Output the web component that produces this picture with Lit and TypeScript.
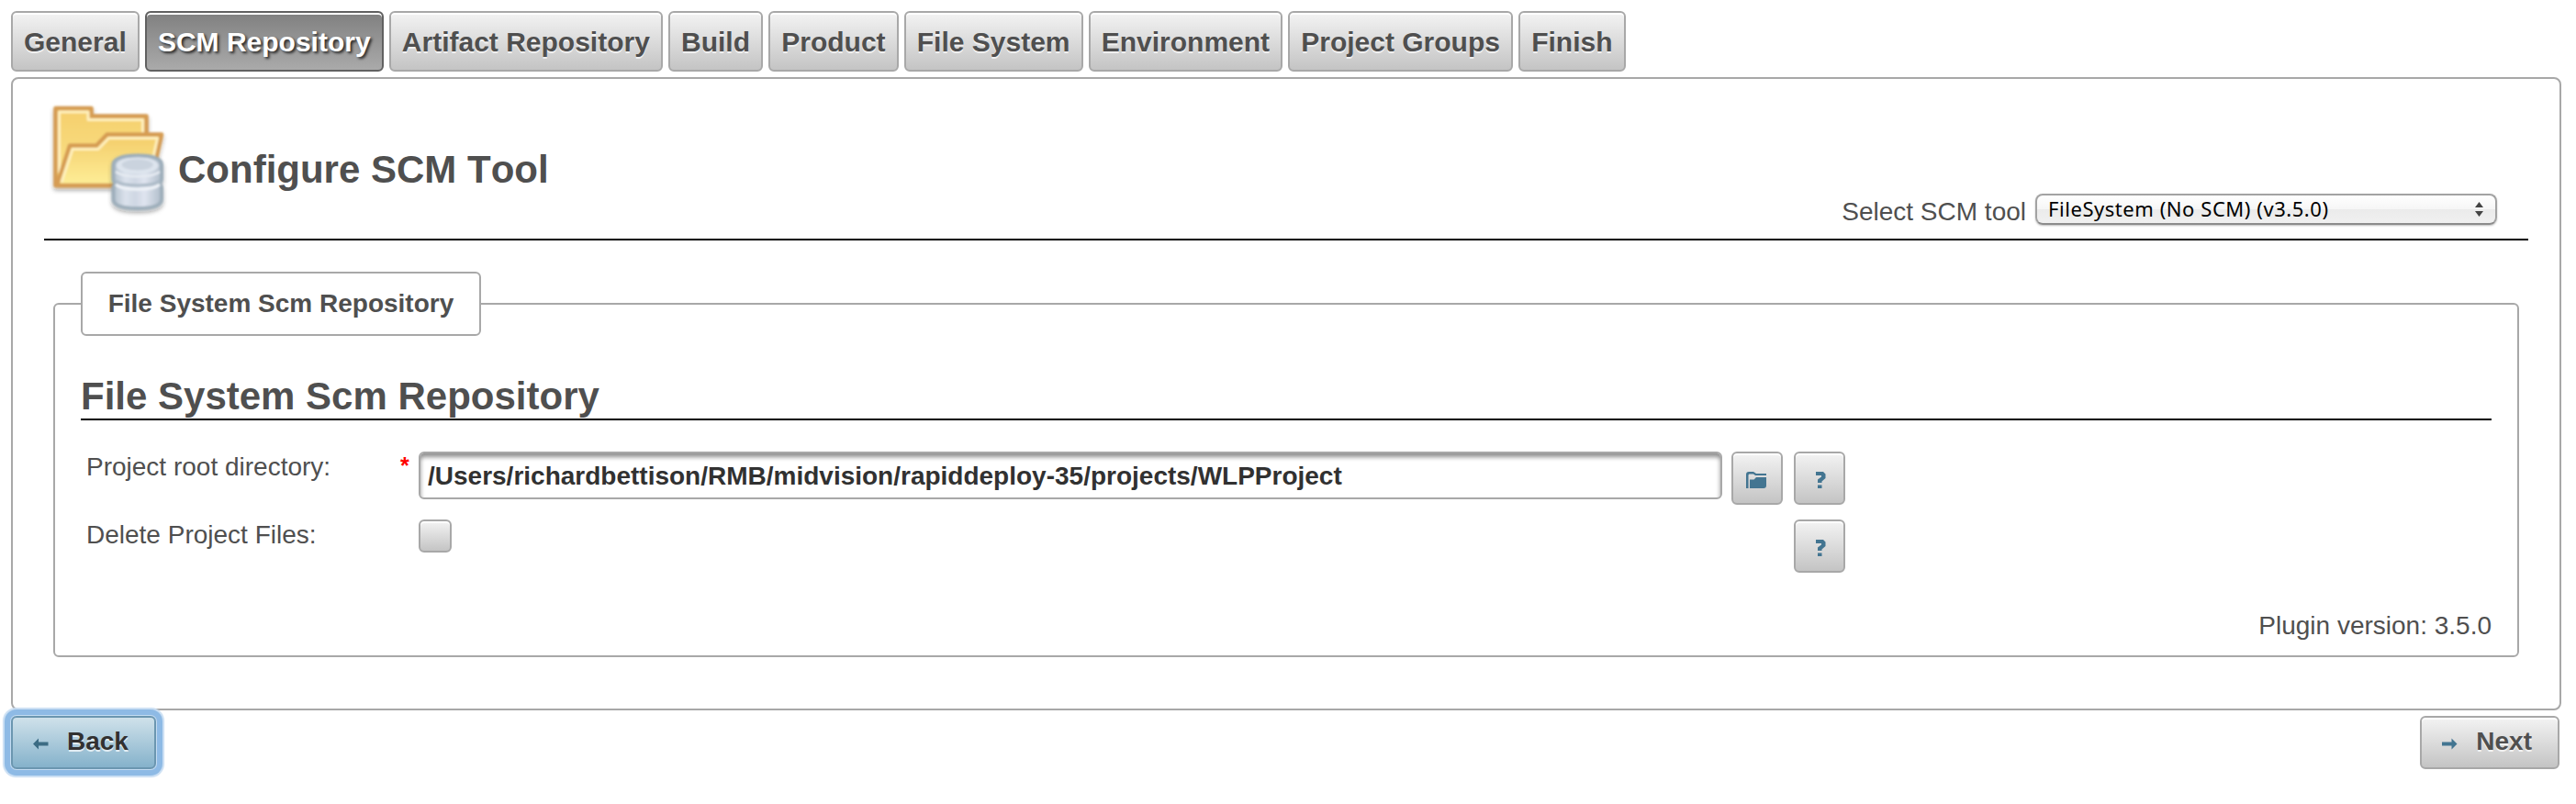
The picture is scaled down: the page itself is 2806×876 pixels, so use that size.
import { html, css, svg, LitElement } from 'lit';
import { customElement, property, state } from 'lit/decorators.js';
import { classMap } from 'lit/directives/class-map.js';

const arrowLeft = svg`<path d="M0 6.500 6 0.500V4.500H16.500V8.500H6V12.500Z" />`;
const arrowRight = svg`<path d="M16.500 6.500 10.500 0.500V4.500H0V8.500H10.500V12.500Z" />`;

@customElement('wizard-tabs')
export class WizardTabs extends LitElement {
	static styles = css`
		:host {
			display: flex;
			gap: 6px;
		}

		.tab {
			box-sizing: border-box;
			height: 66px;
			padding: 0 12.2px 0 12px;
			border: 2px solid #a8a8a8;
			border-radius: 6px;
			background: linear-gradient(#f3f3f3, #c4c4c4);
			box-shadow: inset 0 2px 0 #fff;
			color: #4f4f4f;
			font: bold 30px/61px 'Liberation Sans', Arial, sans-serif;
			text-shadow: 0 2px 0 rgba(255, 255, 255, 0.7);
			white-space: nowrap;
		}

		.tab.active {
			border-color: #616161;
			background: linear-gradient(#808080, #aaaaaa);
			color: #fff;
			text-shadow: 2px 2px 3px rgba(0, 0, 0, 0.75);
		}
	`;

	@property({ type: Array }) tabs: string[] = [];
	@property() active = '';

	render() {
		return html`${this.tabs.map(
			(tab) => html`<button
				class=${classMap({ tab: true, active: tab === this.active })}
				@click=${() => this._select(tab)}
			>${tab}</button>`
		)}`;
	}

	_select(tab: string) {
		this.dispatchEvent(new CustomEvent('select-tab', { detail: { value: tab } }));
	}
}

@customElement('scm-icon')
export class ScmIcon extends LitElement {
	static styles = css`
		:host {
			display: block;
			width: 128px;
			height: 128px;
		}

		.icon {
			display: block;
			overflow: visible;
		}
	`;

	render() {
		return html`<svg class="icon" width="128" height="128" viewBox="0 0 128 128">
			<defs>
				<linearGradient id="back" x1="0" y1="0" x2="0" y2="1">
					<stop offset="0" stop-color="#f5cf6c" />
					<stop offset="1" stop-color="#fbe38a" />
				</linearGradient>
				<linearGradient id="front" x1="0" y1="0" x2="0" y2="1">
					<stop offset="0" stop-color="#f3cc69" />
					<stop offset="1" stop-color="#feee98" />
				</linearGradient>
				<linearGradient id="metal">
					<stop offset="0" stop-color="#b3c0cd" />
					<stop offset="0.25" stop-color="#dbe2ec" />
					<stop offset="0.45" stop-color="#cfd7e3" />
					<stop offset="0.65" stop-color="#dfe4ef" />
					<stop offset="1" stop-color="#b0bdca" />
				</linearGradient>
				<filter id="shade" x="-20%" y="-20%" width="140%" height="150%">
					<feDropShadow dx="0" dy="3" stdDeviation="2" flood-color="#000" flood-opacity="0.35" />
				</filter>
				<filter id="soft"><feGaussianBlur stdDeviation="0.9" /></filter>
			</defs>
			<g filter="url(#shade)">
				<g filter="url(#soft)" stroke-linejoin="round">
					<path d="M6.500 92V8H45.500V16.500H105.500V92Z" fill="url(#back)" stroke="#d69c52" stroke-width="4.500" />
					<path d="M10.500 78V12H42V20.500H101.500V34" fill="none" stroke="#fff0bd" stroke-width="3" />
					<path d="M8 92 22 48.500H51L62.500 36.500H122L109 92Z" fill="url(#front)" stroke="#d69c52" stroke-width="4.500" />
					<path d="M13 88.500 25 52.500H53L64.500 40.500H117.500L112 66" fill="none" stroke="#fff0bd" stroke-width="3" />
				</g>
			</g>
			<g filter="url(#shade)">
				<g filter="url(#soft)">
					<path
						d="M69.500 70C69.500 63 79 59.500 96 59.500S122 63 122 70V84Q122 88 119.500 90.500Q122 92 122 96V107C122 114 112 117 96 117S69.500 114 69.500 107V96Q69.500 92 72 90.500Q69.500 88 69.500 84Z"
						fill="url(#metal)"
						stroke="#9eafbb"
						stroke-width="4"
					/>
					<ellipse cx="95.700" cy="70.500" rx="23" ry="9" fill="#dde4ed" />
					<ellipse cx="95.700" cy="69.500" rx="17" ry="6" fill="#cad3de" />
					<path d="M72 77C80 84 112 84 120 77" fill="none" stroke="#e6ebf2" stroke-width="2.500" />
					<path d="M72 87C80 93.500 112 93.500 120 87" fill="none" stroke="#adbbc8" stroke-width="3" />
					<path d="M72 91C80 98 112 98 120 91" fill="none" stroke="#eff3f8" stroke-width="3" />
				</g>
			</g>
		</svg>`;
	}
}

@customElement('app-root')
export class AppRoot extends LitElement {
	static styles = css`
		:host {
			display: block;
			box-sizing: border-box;
			height: 876px;
			padding: 12px 16px 0 12px;
			background: #fff;
			color: #4f4f4f;
			font: 28px/32px 'Liberation Sans', Arial, sans-serif;
		}

		.panel {
			box-sizing: border-box;
			height: 690px;
			margin-top: 6px;
			padding: 0 34px;
			border: 2px solid #a8a8a8;
			border-radius: 8px;
		}

		.header {
			display: flex;
			box-sizing: border-box;
			height: 176px;
			padding: 24px 34px 0 6px;
			border-bottom: 2px solid #000;
		}

		.title {
			flex: 1;
			margin: 51px 0 0 12px;
			font-size: 42px;
			line-height: 48px;
			font-kerning: none;
		}

		.tool {
			display: flex;
			gap: 10px;
			padding-top: 101px;
		}

		.tool-label {
			padding-top: 4px;
		}

		.select {
			display: flex;
			align-items: center;
			justify-content: space-between;
			box-sizing: border-box;
			width: 503px;
			height: 34px;
			padding: 0 13px 0 12px;
			border: 2px solid #a3a3a3;
			border-bottom-color: #8c8c8c;
			border-radius: 8px;
			background: linear-gradient(#fff, #f6f6f6 49%, #ebebeb 51%, #f0f0f0);
			box-shadow: 0 1px 2px rgba(0, 0, 0, 0.25);
			color: #000;
			font: 22px/30px 'Noto Sans', 'Open Sans', sans-serif;
		}

		.select-value {
			padding-bottom: 2px;
			letter-spacing: 0.55px;
		}

		.fieldset {
			min-width: 0;
			margin: 34px 10px 0;
			padding: 41px 28px 16px;
			border: 2px solid #a8a8a8;
			border-radius: 6px;
		}

		.legend {
			box-sizing: border-box;
			height: 70px;
			padding: 17px 27.700px;
			border: 2px solid #a8a8a8;
			border-radius: 6px;
			font-weight: bold;
		}

		.subtitle {
			margin: 0 0 34px;
			border-bottom: 2px solid #000;
			font-size: 42px;
			line-height: 49px;
		}

		.form {
			display: grid;
			grid-template-columns: 342px 20px 1420px 56px 56px;
			grid-auto-rows: 58px;
			row-gap: 16px;
			margin-left: 6px;
		}

		.label {
			padding-top: 1px;
		}

		.required {
			color: #f00;
			font-size: 25px;
			font-weight: bold;
			line-height: 30px;
		}

		.input {
			box-sizing: border-box;
			width: 100%;
			height: 52px;
			padding: 1px 8px 0;
			border: 2px solid #a8a8a8;
			border-radius: 6px;
			outline: none;
			box-shadow: inset 0 4px 5px #8f8f8f;
			color: #313131;
			font: bold 28px 'Liberation Sans', Arial, sans-serif;
		}

		.browse {
			margin-left: 10px;
		}

		.help {
			grid-column: 5;
			margin-left: 22px;
		}

		.button,
		.check {
			box-sizing: border-box;
			border: 2px solid #a8a8a8;
			border-radius: 6px;
			background: linear-gradient(#f3f3f3, #c4c4c4);
			box-shadow: inset 0 2px 0 #fff;
			color: #4f4f4f;
		}

		.button {
			display: flex;
			align-items: center;
			justify-content: center;
			height: 58px;
			padding: 0;
			fill: #437591;
			font: bold 28px/32px 'Liberation Sans', Arial, sans-serif;
			text-shadow: 0 2px 0 rgba(255, 255, 255, 0.7);
		}

		.square {
			width: 56px;
			padding-top: 3px;
		}

		.browse {
			padding-right: 2px;
		}

		.help {
			padding-left: 2px;
		}

		.check {
			appearance: none;
			width: 36px;
			height: 36px;
			margin: 0;
		}

		.version {
			margin-top: 42px;
			text-align: right;
		}

		.footer {
			display: flex;
			justify-content: space-between;
			padding: 6px 2px 0 0;
		}

		.nav {
			justify-content: flex-start;
			gap: 20px;
			padding: 0 28px 2px 22px;
		}

		.nav.focused {
			position: relative;
			border-color: #6b96b0;
			outline: none;
			background: linear-gradient(#cfe1ea, #85b2cb);
			box-shadow: 0 0 0 1px #c4dcf2, 0 0 0 7px #8ebae5, 0 0 1px 9px #c9def3;
			color: #313131;
			fill: #3c6c84;
		}

		.arrow {
			margin-top: 4px;
		}
	`;

	@state() activeTab = 'SCM Repository';

	tabs = [
		'General',
		'SCM Repository',
		'Artifact Repository',
		'Build',
		'Product',
		'File System',
		'Environment',
		'Project Groups',
		'Finish'
	];

	render() {
		return html`
			<wizard-tabs
				.tabs=${this.tabs}
				.active=${this.activeTab}
				@select-tab=${this._onSelectTab}
			></wizard-tabs>
			<main class="panel">
				<header class="header">
					<scm-icon></scm-icon>
					<h1 class="title">Configure SCM Tool</h1>
					<div class="tool">
						<span class="tool-label">Select SCM tool</span>
						<div class="select" role="combobox" aria-label="Select SCM tool">
							<span class="select-value">FileSystem (No SCM) (v3.5.0)</span>
							<svg width="9" height="16" viewBox="0 0 9 16" fill="#444">
								<path d="M0 6 4.500 0 9 6ZM0 10H9L4.500 16Z" />
							</svg>
						</div>
					</div>
				</header>
				<fieldset class="fieldset">
					<legend class="legend">File System Scm Repository</legend>
					<h2 class="subtitle">File System Scm Repository</h2>
					<div class="form">
						<label class="label" for="root">Project root directory:</label>
						<span class="required">*</span>
						<input
							id="root"
							class="input"
							.value=${'/Users/richardbettison/RMB/midvision/rapiddeploy-35/projects/WLPProject'}
						/>
						<button class="button square browse" aria-label="Browse">
							<svg width="24" height="20" viewBox="0 0 24 20">
								<path d="M1 19V4Q1 1 4 1H9L12 3H23V5H11L9 3.500H4.500Q3.500 3.500 3.500 5V19Z" />
								<path d="M5 19V9.500H9.500L12 7H23V16Q23 19 20 19Z" />
							</svg>
						</button>
						${this._help()}
						<label class="label" for="delete">Delete Project Files:</label>
						<span></span>
						<input id="delete" class="check" type="checkbox" />
						${this._help()}
					</div>
					<div class="version">Plugin version: 3.5.0</div>
				</fieldset>
			</main>
			<footer class="footer">
				<button class="button nav focused">
					<svg class="arrow" width="17" height="13" viewBox="0 0 17 13">${arrowLeft}</svg>Back
				</button>
				<button class="button nav">
					<svg class="arrow" width="17" height="13" viewBox="0 0 17 13">${arrowRight}</svg>Next
				</button>
			</footer>
		`;
	}

	_help() {
		return html`<button class="button square help" aria-label="Help">
			<svg width="12" height="20" viewBox="0 0 12 20">
				<path d="M1 1H9L11.500 3.500V8L7.500 11.500V13H3V9.500L7 6.500V5H1ZM3 15.500H7.500V19H3Z" />
			</svg>
		</button>`;
	}

	_onSelectTab(event: CustomEvent) {
		this.activeTab = event.detail.value;
	}
}
